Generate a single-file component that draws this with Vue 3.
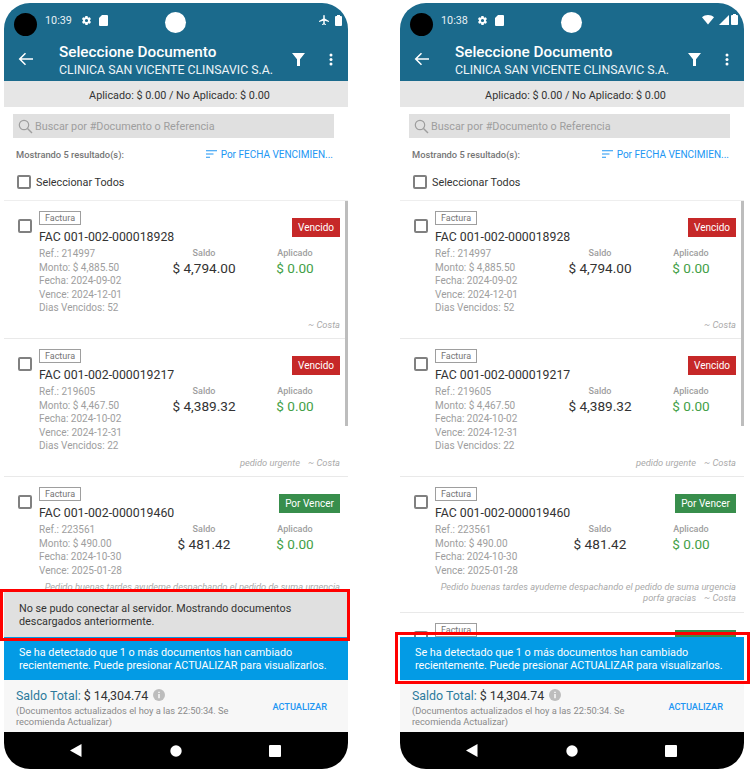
<script setup>
const docs = [
  { no: '001-002-000018928', ref: '214997', monto: '4,885.50', fecha: '2024-09-02', vence: '2024-12-01', dias: '52', saldo: '4,794.00', status: 'Vencido', cls: 'red', note: '' },
  { no: '001-002-000019217', ref: '219605', monto: '4,467.50', fecha: '2024-10-02', vence: '2024-12-31', dias: '22', saldo: '4,389.32', status: 'Vencido', cls: 'red', note: 'pedido urgente' },
  { no: '001-002-000019460', ref: '223561', monto: '490.00', fecha: '2024-10-30', vence: '2025-01-28', dias: '', saldo: '481.42', status: 'Por Vencer', cls: 'green', note: 'Pedido buenas tardes ayudeme despachando el pedido de suma urgencia porfa gracias' },
  { no: '001-002-000019999', ref: '', monto: '', fecha: '', vence: '', dias: '', saldo: '', status: '', cls: 'green', note: '' }
]
const phones = [
  { time: '10:39', airplane: true, grey: true },
  { time: '10:38', airplane: false, grey: false }
]
</script>

<template>
  <div class="page">
    <div v-for="p in phones" :key="p.time" class="phone-wrap">
      <div class="phone">
        <header class="appbar">
          <div class="status">
            <span class="camera"></span>
            <span class="time">{{ p.time }}</span>
            <svg class="st-ic" width="11" height="11" viewBox="0 0 24 24"><path fill="#fff" d="M19.4 13c.1-.3.1-.7.1-1s0-.7-.1-1l2.1-1.6c.2-.2.2-.4.1-.6l-2-3.5c-.1-.2-.4-.3-.6-.2l-2.5 1c-.5-.4-1.1-.7-1.7-1l-.4-2.6c0-.3-.2-.5-.5-.5h-4c-.3 0-.5.2-.5.4l-.4 2.7c-.6.2-1.200.6-1.700 1l-2.500-1c-.2-.1-.5 0-.6.2l-2 3.500c-.1.2-.1.4.1.6L4.500 11c0 .3-.1.700-.1 1s0 .7.1 1l-2.100 1.600c-.2.2-.2.4-.1.6l2 3.500c.1.2.4.3.6.2l2.500-1c.5.4 1.100.7 1.700 1l.4 2.600c0 .3.2.5.5.5h4c.3 0 .5-.2.5-.4l.4-2.700c.6-.2 1.200-.6 1.700-1l2.500 1c.2.1.5 0 .6-.2l2-3.500c.1-.2.1-.4-.1-.6zM12 15.500a3.500 3.500 0 1 1 0-7 3.500 3.500 0 0 1 0 7z"/></svg>
            <svg class="st-ic sd" width="9" height="11" viewBox="0 0 9 11"><path fill="#fff" d="M3 0h5a1 1 0 0 1 1 1v9a1 1 0 0 1-1 1H1a1 1 0 0 1-1-1V3z"/></svg>
            <span class="punch"></span>
            <span class="st-right">
              <svg v-if="p.airplane" width="12" height="12" viewBox="0 0 24 24"><path fill="#fff" d="M22 16v-2l-8.500-5V3.500a1.500 1.500 0 0 0-3 0V9L2 14v2l8.500-2.500V19L8 20.500V22l4-1 4 1v-1.500L13.500 19v-5.500z"/></svg>
              <template v-else>
                <svg width="12" height="10" viewBox="0 0 12 10"><path fill="#fff" d="M0 2.200C1.600.8 3.700 0 6 0s4.400.8 6 2.200L6 9.500z"/></svg>
                <svg width="10" height="10" viewBox="0 0 10 10"><path fill="#fff" d="M10 0v10H0z"/></svg>
              </template>
              <svg width="7" height="11" viewBox="0 0 7 11"><path fill="#fff" d="M2 0h3v1h1a1 1 0 0 1 1 1v8a1 1 0 0 1-1 1H1a1 1 0 0 1-1-1V2a1 1 0 0 1 1-1h1z"/></svg>
            </span>
          </div>
          <div class="toolbar">
            <svg class="back" width="16" height="14" viewBox="0 0 16 14"><path fill="none" stroke="#fff" stroke-width="1.500" d="M15 7H2M7.500 1.200 1.700 7l5.800 5.800"/></svg>
            <div class="titles">
              <div class="title">Seleccione Documento</div>
              <div class="subtitle">CLINICA SAN VICENTE CLINSAVIC S.A.</div>
            </div>
            <svg class="filter" width="13" height="13" viewBox="0 0 13 13"><path fill="#fff" d="M0 0h13L8 6.200V13H5V6.200z"/></svg>
            <svg class="dots" width="4" height="13" viewBox="0 0 4 13"><circle cx="2" cy="2" r="1.500" fill="#fff"/><circle cx="2" cy="6.500" r="1.500" fill="#fff"/><circle cx="2" cy="11" r="1.500" fill="#fff"/></svg>
          </div>
        </header>

        <div class="summary">Aplicado: $ 0.00 / No Aplicado: $ 0.00</div>

        <div class="search">
          <svg width="15" height="15" viewBox="0 0 15 15"><circle cx="6" cy="6" r="4.700" fill="none" stroke="#9e9e9e" stroke-width="1.200"/><path d="m9.500 9.500 4.500 4.500" stroke="#9e9e9e" stroke-width="1.400"/></svg>
          <span>Buscar por #Documento o Referencia</span>
        </div>

        <div class="results">
          <span class="count">Mostrando 5 resultado(s):</span>
          <span class="sort">
            <svg width="11" height="8" viewBox="0 0 11 8"><path d="M0 .750h11M0 4h7.500M0 7.250h4" stroke="#2196f3" stroke-width="1.200"/></svg>
            Por FECHA VENCIMIEN...
          </span>
        </div>

        <div class="select-all">
          <span class="check"></span>
          <span>Seleccionar Todos</span>
        </div>

        <div class="list">
          <article v-for="d in docs" :key="d.no" class="card">
            <span class="check"></span>
            <div class="card-body">
              <span class="tag">Factura</span>
              <div class="doc-no">FAC {{ d.no }}</div>
              <div v-if="d.ref" class="info">
                <div class="meta">
                  <div>Ref.: {{ d.ref }}</div>
                  <div>Monto: $ {{ d.monto }}</div>
                  <div>Fecha: {{ d.fecha }}</div>
                  <div>Vence: {{ d.vence }}</div>
                  <div v-if="d.dias">Dias Vencidos: {{ d.dias }}</div>
                </div>
                <div class="col saldo">
                  <div class="lbl">Saldo</div>
                  <div class="amt">$ {{ d.saldo }}</div>
                </div>
                <div class="col aplicado">
                  <div class="lbl">Aplicado</div>
                  <div class="amt ok">$ 0.00</div>
                </div>
              </div>
              <div v-if="d.ref" class="note">{{ d.note }}<span class="who">~ Costa</span></div>
            </div>
            <span class="badge" :class="d.cls">{{ d.status }}</span>
          </article>
          <span class="scrollbar"></span>
        </div>

        <div v-if="p.grey" class="banner grey">No se pudo conectar al servidor. Mostrando documentos descargados anteriormente.</div>
        <div class="banner blue">Se ha detectado que 1 o más documentos han cambiado recientemente. Puede presionar ACTUALIZAR para visualizarlos.</div>

        <footer class="total">
          <div class="total-text">
            <div class="total-line">
              <span class="total-lbl">Saldo Total:</span> <span class="total-val">$ 14,304.74</span>
              <svg width="12" height="12" viewBox="0 0 12 12"><circle cx="6" cy="6" r="6" fill="#bdbdbd"/><path d="M5.300 2.700h1.400V4H5.300zM5.300 5h1.400v4.300H5.300z" fill="#fff"/></svg>
            </div>
            <div class="total-note">(Documentos actualizados el hoy a las 22:50:34. Se recomienda Actualizar)</div>
          </div>
          <span class="refresh">ACTUALIZAR</span>
        </footer>

        <nav class="navbar">
          <svg width="12" height="13" viewBox="0 0 12 13"><path fill="#fff" d="M11.500 0v13L0 6.500z"/></svg>
          <svg width="12" height="12" viewBox="0 0 12 12"><circle cx="6" cy="6" r="5.700" fill="#fff"/></svg>
          <svg width="12" height="12" viewBox="0 0 12 12"><rect width="12" height="12" rx="1" fill="#fff"/></svg>
        </nav>
      </div>
      <div class="mark" :class="p.grey ? 'mark-grey' : 'mark-blue'"></div>
    </div>
  </div>
</template>

<style>
html, body { margin: 0; background: #fff; }
</style>

<style scoped>
.page {
  width: 750px;
  height: 772px;
  box-sizing: border-box;
  padding: 3px 6px 3px 4px;
  display: flex;
  gap: 52px;
  overflow: hidden;
  font-family: Roboto, "Liberation Sans", sans-serif;
  color: #212121;
}
.phone-wrap { position: relative; width: 344px; height: 766px; }
.phone {
  position: relative;
  width: 344px;
  height: 766px;
  border-radius: 26px;
  overflow: hidden;
  background: #fff;
  display: flex;
  flex-direction: column;
}
.appbar { height: 78px; background: #1b6a8c; color: #fff; flex: none; box-sizing: border-box; }
.status { position: relative; height: 33px; display: flex; align-items: center; padding-top: 2px; box-sizing: border-box; padding-left: 41px; }
.camera { position: absolute; left: 10px; top: 10px; width: 23px; height: 23px; border-radius: 50%; background: #000; }
.punch { position: absolute; left: 161px; top: 9px; width: 21px; height: 21px; border-radius: 50%; background: #fff; }
.time { font-size: 10.800px; width: 36px; color: #e8f0f4; }
.st-ic { margin-right: 7px; }
.sd { margin-left: 0; }
.st-right { position: absolute; right: 6px; top: 11px; display: flex; gap: 2px; align-items: center; }
.st-right svg:first-child { margin-right: 3px; }
.toolbar { display: flex; align-items: center; height: 45px; position: relative; }
.back { margin-left: 14px; }
.titles { margin-left: 25px; flex: 1; padding-top: 5px; }
.title { font-size: 15.300px; font-weight: 500; line-height: 19px; }
.subtitle { font-size: 12.300px; line-height: 17px; color: #eef4f7; }
.filter { margin-right: 24px; margin-top: 1px; }
.dots { margin-right: 15px; margin-top: 1px; }
.summary {
  height: 26px; flex: none; background: #e6e6e6; display: flex; align-items: center; justify-content: center;
  font-size: 10.800px; color: #333; padding-left: 7px; padding-top: 2px; box-sizing: border-box;
}
.search {
  flex: none; margin: 7px 14px 0 9px; height: 24px; background: #e0e0e0; display: flex; align-items: center;
  padding-left: 5px; gap: 2px; font-size: 10.800px; color: #9e9e9e;
}
.results { flex: none; height: 32px; display: flex; align-items: center; justify-content: space-between; padding: 0 15px 0 12px; }
.count { font-size: 9.300px; font-weight: 500; color: #757575; }
.sort { font-size: 10px; color: #2196f3; display: flex; align-items: center; gap: 4px; }
.select-all { flex: none; height: 24px; display: flex; align-items: center; padding-left: 13px; gap: 5px; font-size: 10.800px; color: #333; }
.check { flex: none; width: 10px; height: 10px; border: 2px solid #808080; border-radius: 2px; display: block; }
.list { position: relative; flex: 1; min-height: 0; overflow: hidden; margin-top: 6px; border-top: 1px solid #eee; }
.card {
  position: relative; border-bottom: 1px solid #e9e9e9; display: flex; align-items: flex-start;
  padding: 10px 8px 8.500px 14px;
}
.card > .check { margin-top: 8px; }
.card-body { flex: 1; margin-left: 7px; min-width: 0; }
.tag {
  display: block; box-sizing: border-box; height: 14px; width: 42px; border: 1px solid #9e9e9e;
  font-size: 9px; line-height: 12px; text-align: center; color: #757575;
}
.doc-no { font-size: 12.300px; line-height: 16px; margin-top: 4px; color: #333; }
.info { display: flex; margin-top: 2px; }
.meta { font-size: 10px; line-height: 13.500px; color: #9e9e9e; width: 114px; white-space: nowrap; }
.col { text-align: center; }
.saldo { width: 74px; margin-left: 14px; }
.aplicado { width: 50px; margin-left: 29px; }
.lbl { font-size: 9px; line-height: 13.500px; color: #9e9e9e; font-weight: 500; }
.amt { font-size: 13.600px; line-height: 15px; color: #333; white-space: nowrap; }
.ok { color: #43a047; }
.note { font-size: 9.300px; font-style: italic; color: #aaa; line-height: 11px; text-align: right; margin-top: 4px; }
.who { margin-left: 8px; }
.badge {
  position: absolute; right: 8px; top: 17px; height: 19px; padding: 0 6px; min-width: 36px; text-align: center;
  font-size: 10px; line-height: 20px; color: #fff;
}
.red { background: #c62828; }
.green { background: #388e4c; min-width: 49px; }
.scrollbar { position: absolute; right: 0; top: 0; width: 3px; height: 225px; background: #bdbdbd; }
.banner { flex: none; box-sizing: border-box; padding: 0 15px; font-size: 10.800px; line-height: 13px; display: flex; align-items: center; }
.grey { height: 45px; background: #e0e0e0; color: #333; }
.blue { height: 43px; background: #039be5; color: #fff; }
.total { flex: none; height: 52px; background: #f7f7f7; display: flex; align-items: center; box-sizing: border-box; padding: 0 21px 0 12px; }
.total-text { flex: 1; min-width: 0; padding-top: 1px; }
.total-line { display: flex; align-items: center; gap: 3px; font-size: 12.400px; line-height: 17px; white-space: pre; }
.total-line svg { margin-left: 2px; }
.total-lbl { color: #2d7a9c; }
.total-val { color: #333; }
.total-note { font-size: 9.300px; line-height: 11px; color: #8a8a8a; width: 226px; margin-top: 1px; }
.refresh { font-size: 9.200px; font-weight: 500; color: #2196f3; }
.navbar { flex: none; height: 37px; background: #000; display: flex; align-items: center; justify-content: space-between; padding: 0 67px 0 66px; }
.mark { position: absolute; border: 3px solid #f00; box-sizing: border-box; pointer-events: none; }
.mark-grey { left: -4px; top: 586px; width: 350px; height: 52px; }
.mark-blue { left: -5px; top: 629px; width: 355px; height: 52px; }
</style>
